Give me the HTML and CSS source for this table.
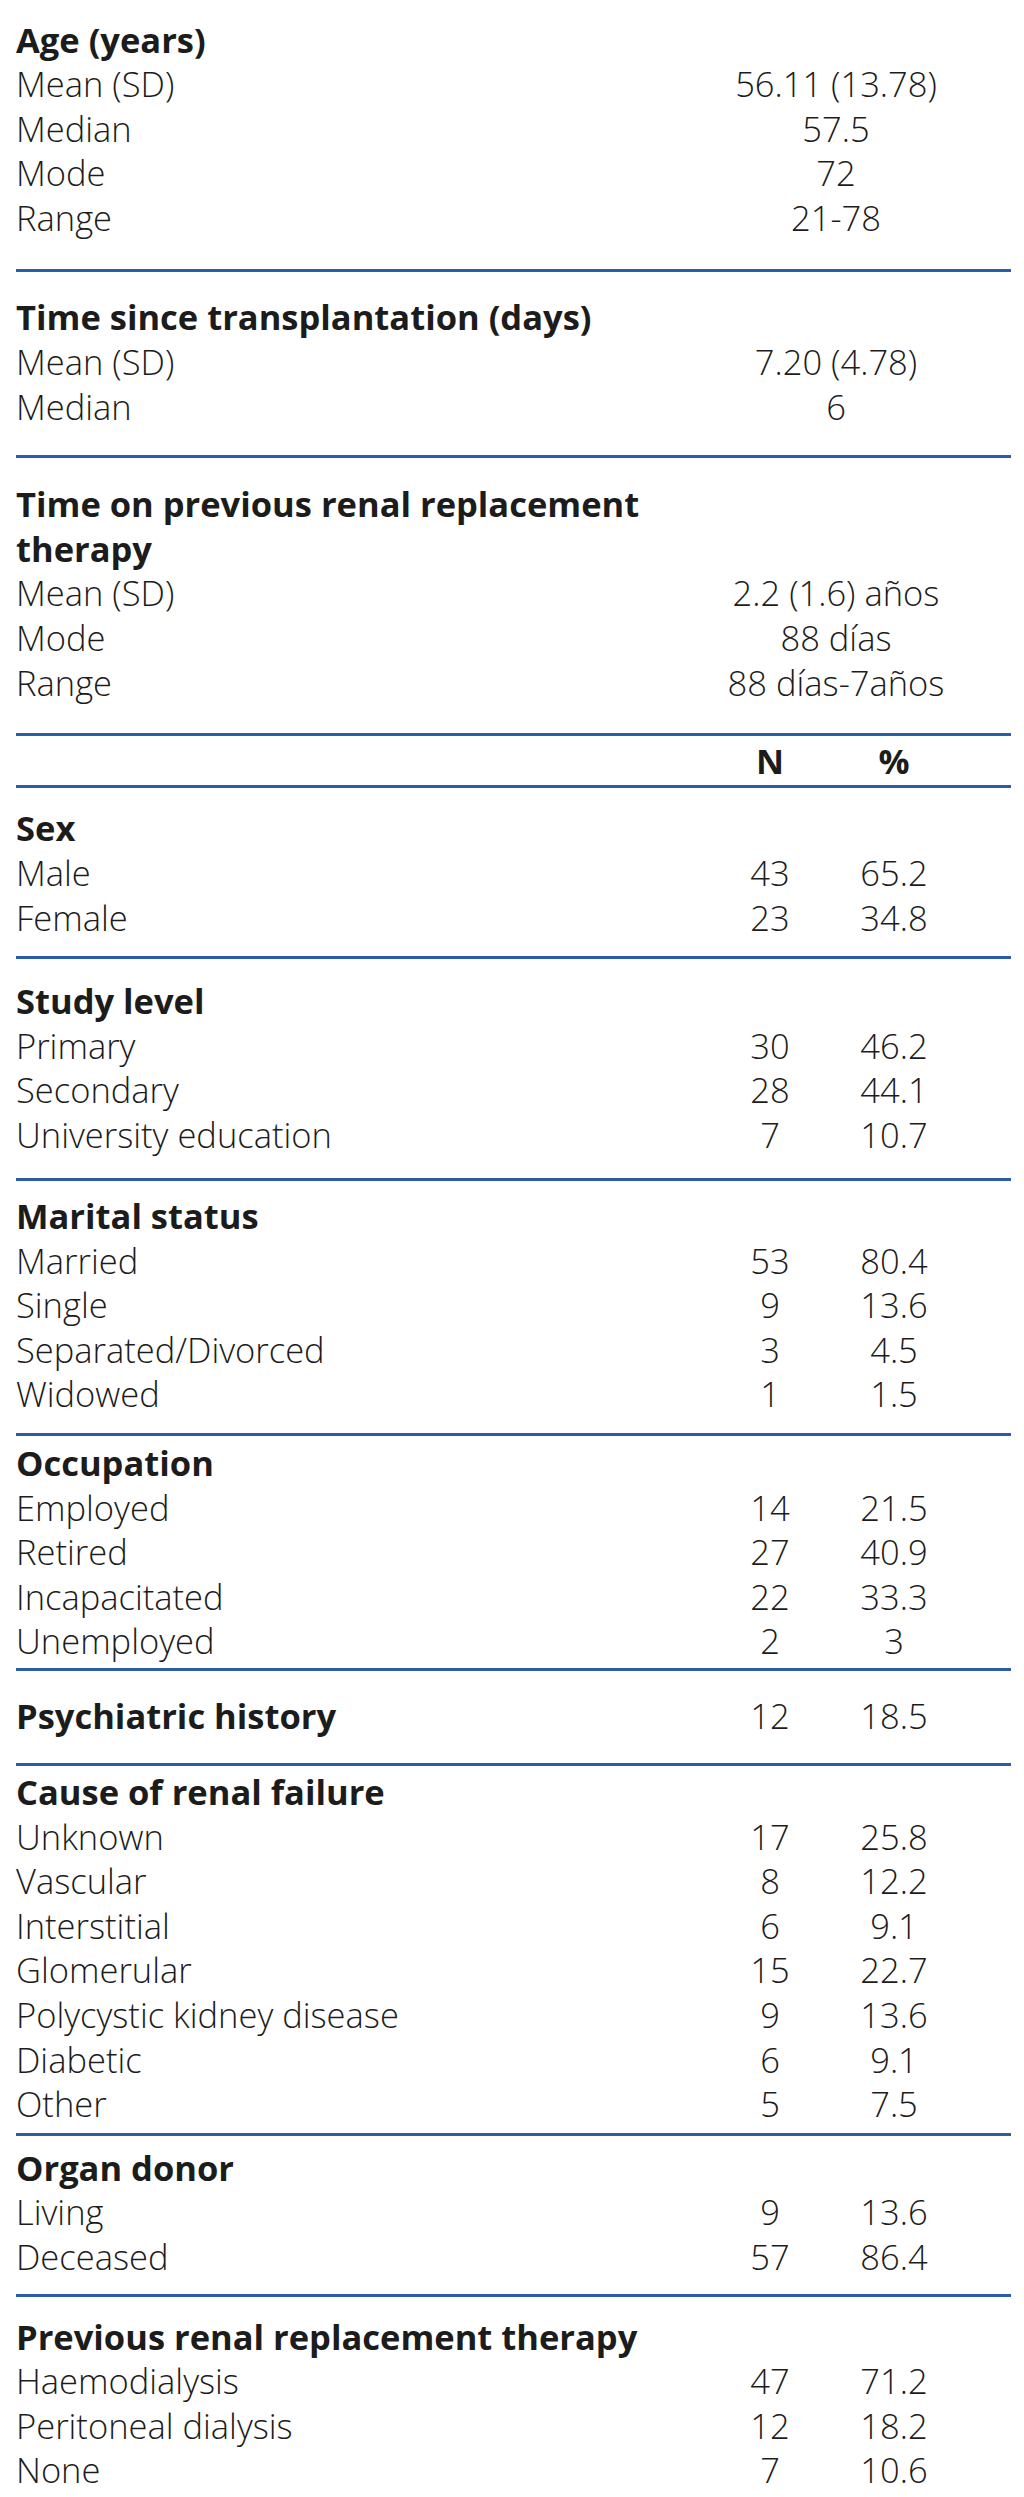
FILE: index.html
```html
<!DOCTYPE html>
<html lang="en">
<head>
<meta charset="utf-8">
<title>Patient characteristics</title>
<link rel="stylesheet" href="styles.css">
</head>
<body>
<main class="sheet">
  <section class="group g-age">
    <h3 class="head">Age (years)</h3>
    <div class="stat"><span>Mean (SD)</span><span class="val">56.11 (13.78)</span></div>
    <div class="stat"><span>Median</span><span class="val">57.5</span></div>
    <div class="stat"><span>Mode</span><span class="val">72</span></div>
    <div class="stat"><span>Range</span><span class="val">21-78</span></div>
  </section>
  <section class="group g-since">
    <h3 class="head">Time since transplantation (days)</h3>
    <div class="stat"><span>Mean (SD)</span><span class="val">7.20 (4.78)</span></div>
    <div class="stat"><span>Median</span><span class="val">6</span></div>
  </section>
  <section class="group g-prev">
    <h3 class="head head-wrap">Time on previous renal replacement therapy</h3>
    <div class="stat"><span>Mean (SD)</span><span class="val">2.2 (1.6) años</span></div>
    <div class="stat"><span>Mode</span><span class="val">88 días</span></div>
    <div class="stat"><span>Range</span><span class="val">88 días-7años</span></div>
  </section>
  <section class="group g-colhead">
    <div class="count count-head"><span></span><span class="n">N</span><span class="p">%</span></div>
  </section>
  <section class="group g-sex">
    <h3 class="head">Sex</h3>
    <div class="count"><span>Male</span><span class="n">43</span><span class="p">65.2</span></div>
    <div class="count"><span>Female</span><span class="n">23</span><span class="p">34.8</span></div>
  </section>
  <section class="group g-study">
    <h3 class="head">Study level</h3>
    <div class="count"><span>Primary</span><span class="n">30</span><span class="p">46.2</span></div>
    <div class="count"><span>Secondary</span><span class="n">28</span><span class="p">44.1</span></div>
    <div class="count"><span>University education</span><span class="n">7</span><span class="p">10.7</span></div>
  </section>
  <section class="group g-marital">
    <h3 class="head">Marital status</h3>
    <div class="count"><span>Married</span><span class="n">53</span><span class="p">80.4</span></div>
    <div class="count"><span>Single</span><span class="n">9</span><span class="p">13.6</span></div>
    <div class="count"><span>Separated/Divorced</span><span class="n">3</span><span class="p">4.5</span></div>
    <div class="count"><span>Widowed</span><span class="n">1</span><span class="p">1.5</span></div>
  </section>
  <section class="group g-occ">
    <h3 class="head">Occupation</h3>
    <div class="count"><span>Employed</span><span class="n">14</span><span class="p">21.5</span></div>
    <div class="count"><span>Retired</span><span class="n">27</span><span class="p">40.9</span></div>
    <div class="count"><span>Incapacitated</span><span class="n">22</span><span class="p">33.3</span></div>
    <div class="count"><span>Unemployed</span><span class="n">2</span><span class="p">3</span></div>
  </section>
  <section class="group g-psych">
    <div class="count count-bold"><span>Psychiatric history</span><span class="n">12</span><span class="p">18.5</span></div>
  </section>
  <section class="group g-cause">
    <h3 class="head">Cause of renal failure</h3>
    <div class="count"><span>Unknown</span><span class="n">17</span><span class="p">25.8</span></div>
    <div class="count"><span>Vascular</span><span class="n">8</span><span class="p">12.2</span></div>
    <div class="count"><span>Interstitial</span><span class="n">6</span><span class="p">9.1</span></div>
    <div class="count"><span>Glomerular</span><span class="n">15</span><span class="p">22.7</span></div>
    <div class="count"><span>Polycystic kidney disease</span><span class="n">9</span><span class="p">13.6</span></div>
    <div class="count"><span>Diabetic</span><span class="n">6</span><span class="p">9.1</span></div>
    <div class="count"><span>Other</span><span class="n">5</span><span class="p">7.5</span></div>
  </section>
  <section class="group g-donor">
    <h3 class="head">Organ donor</h3>
    <div class="count"><span>Living</span><span class="n">9</span><span class="p">13.6</span></div>
    <div class="count"><span>Deceased</span><span class="n">57</span><span class="p">86.4</span></div>
  </section>
  <section class="group g-rrt">
    <h3 class="head">Previous renal replacement therapy</h3>
    <div class="count"><span>Haemodialysis</span><span class="n">47</span><span class="p">71.2</span></div>
    <div class="count"><span>Peritoneal dialysis</span><span class="n">12</span><span class="p">18.2</span></div>
    <div class="count"><span>None</span><span class="n">7</span><span class="p">10.6</span></div>
  </section>
</main>
</body>
</html>
```
FILE: styles.css
```css
html, body {
  margin: 0;
  padding: 0;
  background: #ffffff;
}

body {
  font-family: "Open Sans", "Noto Sans", "Liberation Sans", sans-serif;
  font-weight: 300;
  font-size: 34.5px;
  line-height: 44.6px;
  color: #1c1c1c;
}

.sheet {
  margin: 0 13px 0 16px;
  padding-top: 17.5px;
}

.group {
  border-bottom: 3px solid #2d5ca6;
}

.group:last-child {
  border-bottom: none;
}

.head {
  margin: 0;
  font-size: 34.5px;
  font-weight: 700;
  line-height: 44.6px;
  letter-spacing: 0;
}

.head-wrap {
  max-width: 660px;
}

.stat {
  display: grid;
  grid-template-columns: 1fr 248px;
  padding-right: 51px;
}

.stat .val {
  text-align: center;
}

.count {
  display: grid;
  grid-template-columns: 1fr 100px 24px 100px;
  padding-right: 67px;
}

.count .n {
  grid-column: 2;
  text-align: center;
}

.count .p {
  grid-column: 4;
  text-align: center;
}

.count-head .n,
.count-head .p,
.count-bold > span:first-child {
  font-weight: 700;
}

/* per-group spacing */
.g-age     { padding: 0 0 29px; }
.g-since   { padding: 23px 0 26px; }
.g-prev    { padding: 24px 0 28px; }
.g-colhead { padding: 3px 0 1.5px; }
.g-sex     { padding: 18px 0 16px; }
.g-study   { padding: 20px 0 20.5px; }
.g-marital { padding: 13px 0 16px; }
.g-occ     { padding: 5px 0 4px; }
.g-psych   { padding: 23px 0 24.5px; }
.g-cause   { padding: 4px 0 6px; }
.g-donor   { padding: 10px 0 14px; }
.g-rrt     { padding: 18px 0 0; }
```
